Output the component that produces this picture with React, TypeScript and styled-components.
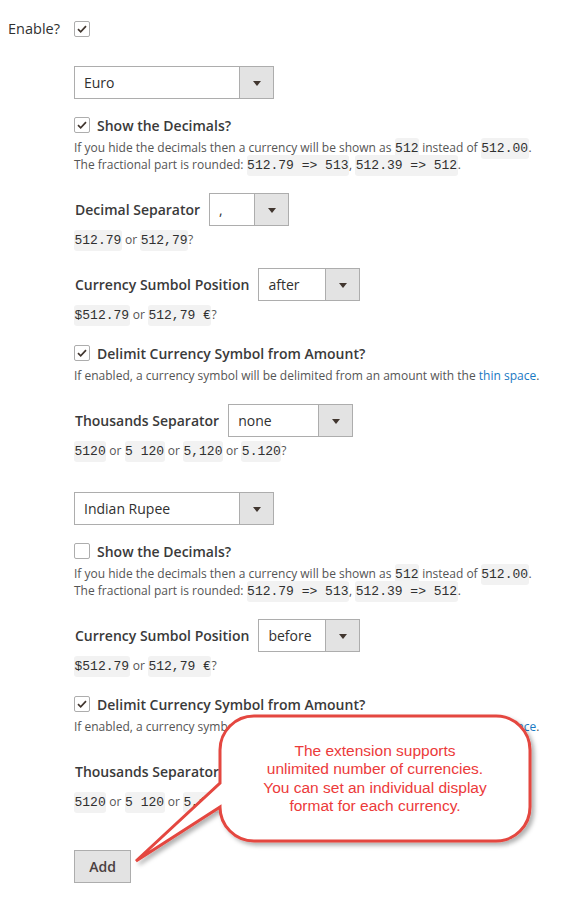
import React from "react";
import styled, { createGlobalStyle } from "styled-components";

const GlobalStyle = createGlobalStyle`
  html, body { margin: 0; padding: 0; background: #fff; }
  body { font-family: "Open Sans", "Liberation Sans", sans-serif; color: #303030; }
`;

const Page = styled.div`
  position: relative;
  width: 573px;
  height: 912px;
  box-sizing: border-box;
  padding: 21px 0 0 8px;
  overflow: hidden;
`;

const EnableRow = styled.div`
  display: flex;
  align-items: center;
  height: 16px;
`;

const EnableLabel = styled.span`
  width: 66px;
  font-size: 14.5px;
  line-height: 16px;
  color: #303030;
`;

const Content = styled.div`
  margin: 29px 0 0 66px;
  display: flex;
  flex-direction: column;
`;

const Block = styled.div`
  display: flex;
  flex-direction: column;
  & + & { margin-top: 33px; }
`;

const Dropdown = styled.div<{ $width: number }>`
  display: flex;
  width: ${(p) => p.$width}px;
  height: 33px;
  box-sizing: border-box;
  border: 1px solid #adadad;
  background: #fff;
  flex: none;
`;

const DropValue = styled.span`
  flex: 1;
  padding-left: 9px;
  font-size: 14px;
  line-height: 31px;
  color: #303030;
`;

const DropArrow = styled.span`
  width: 33px;
  flex: none;
  border-left: 1px solid #adadad;
  background: #e3e3e3;
  display: flex;
  align-items: center;
  justify-content: center;
  &::after {
    content: "";
    border-left: 4px solid transparent;
    border-right: 4px solid transparent;
    border-top: 5px solid #41362f;
    margin-top: 1px;
  }
`;

const SelectRow = styled.div`
  display: flex;
  align-items: center;
  gap: 9px;
  margin-top: 20px;
`;

const FieldLabel = styled.span`
  font-size: 14px;
  font-weight: 600;
  color: #3a3a3a;
  padding-left: 1px;
`;

const CheckRow = styled.label`
  display: flex;
  align-items: center;
  gap: 6px;
  height: 20px;
  margin-top: 20px;
  ${Dropdown} + & { margin-top: 16px; }
`;

const Box = styled.span<{ $checked: boolean }>`
  width: 16px;
  height: 16px;
  box-sizing: border-box;
  border: 1px solid #adadad;
  border-radius: 2px;
  background: #fff;
  display: flex;
  align-items: center;
  justify-content: center;
  flex: none;
  svg { display: ${(p) => (p.$checked ? "block" : "none")}; }
`;

const Note = styled.div`
  margin-top: 5px;
  font-size: 12px;
  line-height: 17px;
  color: #555;
  ${CheckRow} + & { margin-top: 4px; }
`;

const Example = styled(Note)`
  margin-top: 5px;
`;

const Code = styled.code`
  font-family: "Liberation Mono", "DejaVu Sans Mono", monospace;
  font-size: 13px;
  line-height: 12px;
  color: #303030;
  background: #f2f2f2;
  padding: 3px 0.5px;
  border-radius: 3px;
  white-space: pre;
`;

const Link = styled.a`
  color: #1979c3;
  text-decoration: none;
`;

const AddButton = styled.button`
  margin-top: 40px;
  align-self: flex-start;
  width: 57px;
  height: 33px;
  border: 1px solid #adadad;
  background: #e3e3e3;
  font-family: "Open Sans", "Liberation Sans", sans-serif;
  font-size: 14px;
  font-weight: 600;
  color: #4a4040;
  padding: 0;
`;

const Callout = styled.div`
  position: absolute;
  left: 128px;
  top: 708px;
  width: 420px;
  height: 170px;
`;

const CalloutSvg = styled.svg`
  position: absolute;
  left: 0;
  top: 0;
`;

const CalloutText = styled.div`
  position: absolute;
  left: 92px;
  top: 8px;
  width: 310px;
  height: 125px;
  display: flex;
  align-items: center;
  justify-content: center;
  text-align: center;
  font-family: "Liberation Sans", Arial, sans-serif;
  font-size: 15.5px;
  line-height: 18.3px;
  color: #ec3a3a;
`;

const Check = () => (
  <svg width="10" height="8" viewBox="0 0 10 8">
    <path d="M1 4.2 L3.7 6.8 L9 1.2" fill="none" stroke="#41362f" strokeWidth="1.7" />
  </svg>
);

const CheckField = ({ checked, label }: { checked: boolean; label: string }) => (
  <CheckRow>
    <Box $checked={checked}>
      <Check />
    </Box>
    <FieldLabel>{label}</FieldLabel>
  </CheckRow>
);

const Select = ({ width, value }: { width: number; value: string }) => (
  <Dropdown $width={width}>
    <DropValue>{value}</DropValue>
    <DropArrow />
  </Dropdown>
);

const SelectField = ({ label, width, value }: { label: string; width: number; value: string }) => (
  <SelectRow>
    <FieldLabel>{label}</FieldLabel>
    <Select width={width} value={value} />
  </SelectRow>
);

const CurrencyBlock = ({
  name,
  decimals,
  decimalSep,
  position,
}: {
  name: string;
  decimals: boolean;
  decimalSep: boolean;
  position: string;
}) => (
  <Block>
    <Select width={200} value={name} />
    <CheckField checked={decimals} label="Show the Decimals?" />
    <Note>
      If you hide the decimals then a currency will be shown as <Code>512</Code> instead of <Code>512.00</Code>.
      <br />
      The fractional part is rounded: <Code>512.79 =&gt; 513</Code>, <Code>512.39 =&gt; 512</Code>.
    </Note>
    {decimalSep && (
      <>
        <SelectField label="Decimal Separator" width={80} value="," />
        <Example>
          <Code>512.79</Code> or <Code>512,79</Code>?
        </Example>
      </>
    )}
    <SelectField label="Currency Sumbol Position" width={102} value={position} />
    <Example>
      <Code>$512.79</Code> or <Code>512,79 €</Code>?
    </Example>
    <CheckField checked label="Delimit Currency Symbol from Amount?" />
    <Note>
      If enabled, a currency symbol will be delimited from an amount with the <Link>thin space</Link>.
    </Note>
    <SelectField label="Thousands Separator" width={125} value="none" />
    <Example>
      <Code>5120</Code> or <Code>5 120</Code> or <Code>5,120</Code> or <Code>5.120</Code>?
    </Example>
  </Block>
);

export default function App() {
  return (
    <Page>
      <GlobalStyle />
      <EnableRow>
        <EnableLabel>Enable?</EnableLabel>
        <Box $checked>
          <Check />
        </Box>
      </EnableRow>
      <Content>
        <CurrencyBlock name="Euro" decimals decimalSep position="after" />
        <CurrencyBlock name="Indian Rupee" decimals={false} decimalSep={false} position="before" />
        <AddButton>Add</AddButton>
      </Content>
      <Callout>
        <CalloutSvg width="420" height="170" viewBox="128 708 420 170">
          <defs>
            <filter id="sh" x="-10%" y="-10%" width="130%" height="130%">
              <feDropShadow dx="3" dy="3" stdDeviation="2" floodColor="#000" floodOpacity="0.3" />
            </filter>
          </defs>
          <path
            d="M254 716 H496 A34 34 0 0 1 530 750 V807 A34 34 0 0 1 496 841 H254 A34 34 0 0 1 220 807 L136 861 L220 783 V750 A34 34 0 0 1 254 716 Z"
            fill="#fff"
            stroke="#e4463f"
            strokeWidth="3"
            strokeLinejoin="miter"
            filter="url(#sh)"
          />
        </CalloutSvg>
        <CalloutText>
          The extension supports
          <br />
          unlimited number of currencies.
          <br />
          You can set an individual display
          <br />
          format for each currency.
        </CalloutText>
      </Callout>
    </Page>
  );
}
